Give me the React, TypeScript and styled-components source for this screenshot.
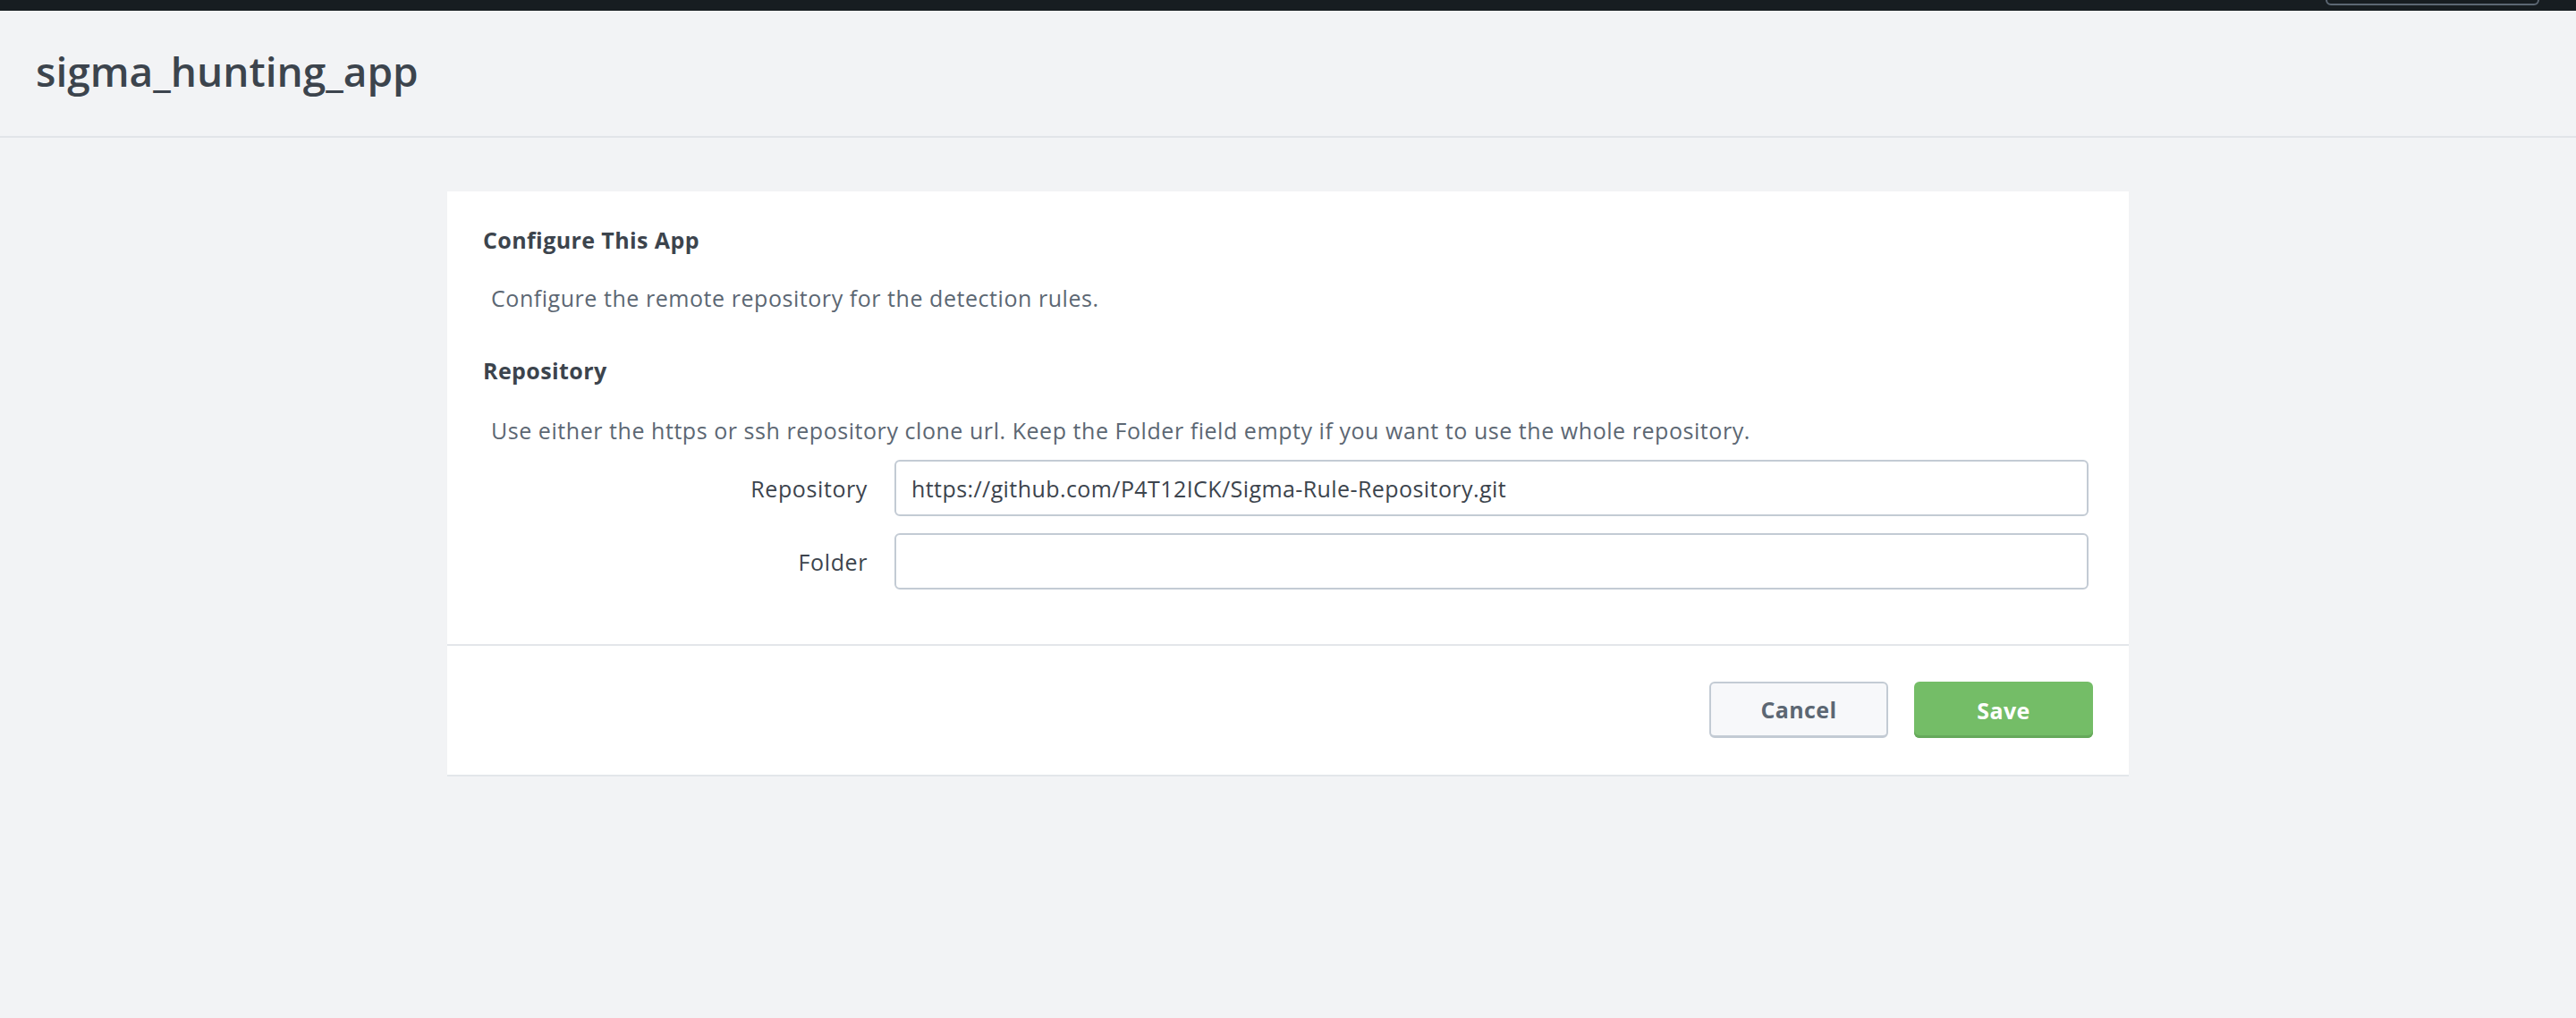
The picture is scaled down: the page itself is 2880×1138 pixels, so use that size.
import React from "react";
import styled, { createGlobalStyle, css } from "styled-components";

const FONT = `"Open Sans", Lato, "Liberation Sans", sans-serif`;

const GlobalStyle = createGlobalStyle`
  html, body {
    margin: 0;
    padding: 0;
    background: #f2f3f5;
    font-family: ${FONT};
    color: #3c444d;
  }
  * { box-sizing: border-box; }
`;

const Page = styled.div`
  min-height: 1138px;
  display: flex;
  flex-direction: column;
  background: #f2f3f5;
`;

const TopBar = styled.div`
  height: 12px;
  background: #171d21;
  display: flex;
  justify-content: flex-end;
  padding-right: 41px;
  overflow: hidden;
`;

const AccountBox = styled.div`
  width: 239px;
  height: 30px;
  margin-top: -24px;
  border: 2px solid #5c6773;
  border-radius: 6px;
`;

const AppHeader = styled.header`
  height: 142px;
  padding: 39px 40px 0;
  border-bottom: 2px solid #e1e4e8;
  background: #f2f3f5;
`;

const AppTitle = styled.h1`
  margin: 0;
  font-size: 46px;
  line-height: 56px;
  font-weight: 600;
  letter-spacing: 0;
  color: #3c444d;
`;

const Main = styled.main`
  display: flex;
  justify-content: center;
  padding-top: 60px;
`;

const Card = styled.section`
  width: 1880px;
  background: #ffffff;
  box-shadow: 0 2px 0 #e3e6ea;
`;

const CardBody = styled.div`
  display: flex;
  flex-direction: column;
  padding: 38px 45px 61px 40px;
`;

const SectionTitle = styled.h2<{ $gap?: number }>`
  margin: ${(p) => p.$gap ?? 0}px 0 0;
  font-size: 25px;
  line-height: 32px;
  font-weight: 700;
  letter-spacing: 0.4px;
  color: #3c444d;
`;

const HelpText = styled.p<{ $gap: number }>`
  margin: ${(p) => p.$gap}px 0 0 9px;
  font-size: 25px;
  line-height: 32px;
  font-weight: 400;
  letter-spacing: 0.55px;
  color: #5c6773;
`;

const FieldRow = styled.label<{ $gap: number }>`
  display: grid;
  grid-template-columns: 430px 1fr;
  column-gap: 30px;
  align-items: center;
  margin-top: ${(p) => p.$gap}px;
`;

const FieldLabel = styled.span`
  text-align: right;
  font-size: 25px;
  line-height: 32px;
  letter-spacing: 0.6px;
  color: #3c444d;
`;

const TextInput = styled.input`
  height: 63px;
  width: 100%;
  padding: 0 17px;
  border: 2px solid #c3cbd4;
  border-radius: 6px;
  background: #ffffff;
  font-family: ${FONT};
  font-size: 25px;
  letter-spacing: 0.42px;
  color: #3c444d;
  outline: none;
`;

const CardFooter = styled.div`
  display: flex;
  justify-content: flex-end;
  gap: 29px;
  padding: 40px 40px 41px;
  border-top: 2px solid #e3e6ea;
`;

const Button = styled.button<{ $variant: "primary" | "secondary" }>`
  width: 200px;
  height: 63px;
  border-radius: 6px;
  font-family: ${FONT};
  font-size: 25px;
  font-weight: 700;
  letter-spacing: 0.4px;
  cursor: pointer;
  ${(p) =>
    p.$variant === "primary"
      ? css`
          background: #74bd67;
          color: #ffffff;
          border: none;
          box-shadow: inset 0 -3px 0 #66a95b;
        `
      : css`
          background: #f7f8fa;
          color: #5c6773;
          border: 2px solid #c3cbd4;
          border-bottom-width: 3px;
        `}
`;

export default function App() {
  return (
    <Page>
      <GlobalStyle />
      <TopBar>
        <AccountBox />
      </TopBar>
      <AppHeader>
        <AppTitle>sigma_hunting_app</AppTitle>
      </AppHeader>
      <Main>
        <Card>
          <CardBody>
            <SectionTitle>Configure This App</SectionTitle>
            <HelpText $gap={33}>Configure the remote repository for the detection rules.</HelpText>
            <SectionTitle $gap={49}>Repository</SectionTitle>
            <HelpText $gap={35}>
              Use either the https or ssh repository clone url. Keep the Folder field empty if you want to use the whole repository.
            </HelpText>
            <FieldRow $gap={17}>
              <FieldLabel>Repository</FieldLabel>
              <TextInput defaultValue="https://github.com/P4T12ICK/Sigma-Rule-Repository.git" />
            </FieldRow>
            <FieldRow $gap={19}>
              <FieldLabel>Folder</FieldLabel>
              <TextInput defaultValue="" />
            </FieldRow>
          </CardBody>
          <CardFooter>
            <Button $variant="secondary">Cancel</Button>
            <Button $variant="primary">Save</Button>
          </CardFooter>
        </Card>
      </Main>
    </Page>
  );
}
